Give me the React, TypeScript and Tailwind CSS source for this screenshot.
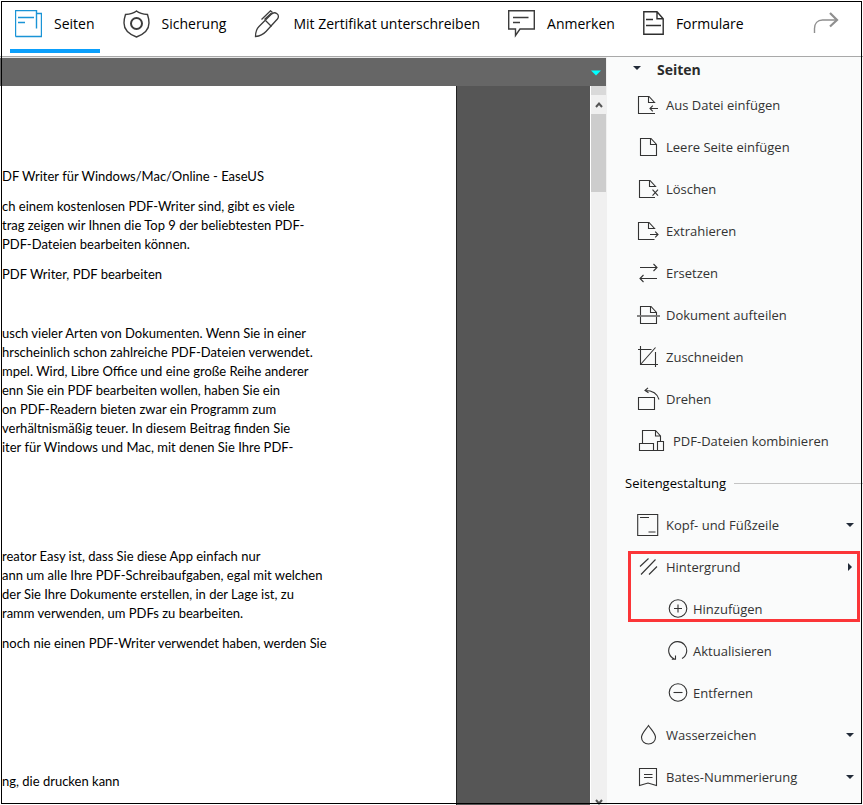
import type { ReactNode } from "react";
import clsx from "clsx";

type IconProps = { children: ReactNode; w?: number; h?: number; className?: string };

/* Line icons are drawn on a 1:1 pixel grid so the strokes stay crisp */
function Icon({ children, w = 24, h = 24, className }: IconProps) {
  return (
    <svg
      width={w}
      height={h}
      viewBox={`0 0 ${w} ${h}`}
      fill="none"
      stroke="currentColor"
      strokeWidth={1.1}
      className={clsx("shrink-0", className)}
      aria-hidden="true"
    >
      {children}
    </svg>
  );
}

const PagesIcon = () => (
  <Icon w={27} h={28} className="text-[#1a94d6]">
    <path d="M.5 26.5V.5h21v18M21.5 3.5h5v23H.5" strokeWidth={1.4} />
    <path d="M3 7.5h16M3 12.5h7" strokeWidth={1.6} />
  </Icon>
);

const ShieldIcon = () => (
  <Icon w={27} h={28} className="text-[#3c3c3c]">
    <path
      d="M13.5 1c2 1.6 6 3.2 11 3.5 1 3 1.5 5.5 1.5 8.5 0 6.5-4.5 11-12.5 14C5.500 24 1 19.5 1 13c0-3 .5-5.500 1.5-8.500 5-.3 9-1.900 11-3.500z"
      strokeWidth={1.4}
    />
    <circle cx="13.5" cy="13.5" r="5.5" strokeWidth={2} />
  </Icon>
);

const PenIcon = () => (
  <Icon w={27} h={28} className="text-[#3c3c3c]">
    <path
      d="M1.500 26.500c0-5 1-7.500 3.500-10L17 4.500c1.500-1.600 4-2.200 6-.8 1.800 1.300 1.800 3.500.4 5.300L12 21.500c-2.500 2.700-5.500 4.500-10.500 5z"
      strokeWidth={1.3}
    />
    <path d="M11.500 10.500l6 6M7.500 9.500l9-8.700 2 1.700" strokeWidth={1.3} />
    <path d="M10.500 9.500l7-6.500" strokeWidth={1.3} />
  </Icon>
);

const CommentIcon = () => (
  <Icon w={27} h={28} className="text-[#3c3c3c]">
    <path d="M.7 .7h25.600v18.300H12l-4.500 6.500v-6.500H.7z" strokeWidth={1.4} />
    <path d="M5 7.500h15.500M5 12.500h7" strokeWidth={1.6} />
  </Icon>
);

const FormIcon = () => (
  <Icon w={21} h={28} className="text-[#2e2e2e]">
    <path d="M.8 1.800h13.200l6.200 7v15.400H.8zM14 1.800v7h6.200" strokeWidth={1.4} />
    <path d="M3 9.500h7M3 15.500h15" strokeWidth={1.6} />
  </Icon>
);

const RedoIcon = () => (
  <Icon w={26} h={24} className="text-[#8f8f8f]">
    <path d="M1.500 22v-4.500c0-5 3-8.500 8-8.500h14" strokeWidth={1.4} />
    <path d="M17 2l7 7-7 6.500" strokeWidth={2.2} />
  </Icon>
);

const InsertIcon = () => (
  <Icon>
    <path d="M18 20.500H1.500v-17h10.500l5.500 6h-6v-6M13 15.500h8M15.800 12.700L13 15.500l2.800 2.800" />
  </Icon>
);

const BlankIcon = () => (
  <Icon>
    <path d="M3.500 3.500h10.500l5.500 6v11h-16zM13.500 3.500v6h6" />
  </Icon>
);

const DeleteIcon = () => (
  <Icon>
    <path d="M18 20.500H2.500v-17h10.500l5.500 6h-6v-6M15.500 12.700l5.500 6M21 12.700l-5.500 6" />
  </Icon>
);

const ExtractIcon = () => (
  <Icon>
    <path d="M17.500 20.500h-16v-17h10.500l5.500 6h-6v-6M13 15.500h8M18.200 12.700l2.800 2.800-2.800 2.800" />
  </Icon>
);

const ReplaceIcon = () => (
  <Icon>
    <path d="M3 6.500h17M16.500 3l3.500 3.500-3.500 3.500M20 17.500H3M6.500 14L3 17.500 6.500 21" />
  </Icon>
);

const SplitIcon = () => (
  <Icon>
    <path d="M3.500 3.500h10.500l5.500 6v11h-16zM13.500 3.500v6h6" />
    <path d="M0 13h23" stroke="#777" strokeWidth={1.8} />
  </Icon>
);

const CropIcon = () => (
  <Icon>
    <path d="M3.500 1v18.500H21M1 4.500h13.500M18.500 7v15M3.500 19.500l15-17" />
  </Icon>
);

const RotateIcon = () => (
  <Icon>
    <path d="M1.500 10.500h16v12h-16zM22 12.500C20.500 7 15.500 3.500 8 3.500M11 .8L8 3.500l3.500 2.300" />
  </Icon>
);

const CombineIcon = () => (
  <Icon w={31}>
    <path d="M5.500 14.500v-13h13l5 5.500v5M18.500 1.500v5.500h5M2.500 14.500h14v7h-14zM20.500 12.500h6v9h-6zM16.500 21.500h4" />
  </Icon>
);

const HeaderFooterIcon = () => (
  <Icon>
    <path d="M.7 1.500h20v21H.7z" />
    <path d="M3 4.500h9M11.500 19h7" />
  </Icon>
);

const BackgroundIcon = () => (
  <Icon>
    <path d="M3 11.500l8.500-8M4 19.500l14.500-15M12 19.500l8-8" />
  </Icon>
);

const AddIcon = () => (
  <Icon w={20} h={20}>
    <circle cx="10" cy="9.5" r="8.8" />
    <path d="M6 9.500h8M10 5.500v8" />
  </Icon>
);

const RefreshIcon = () => (
  <Icon w={20} h={20}>
    <path d="M6.500 18A9 9 0 1 1 14 17.500M3.800 18.300h3.700v-3.800" />
  </Icon>
);

const RemoveIcon = () => (
  <Icon w={20} h={20}>
    <circle cx="10" cy="9.5" r="8.8" />
    <path d="M5.500 9.500h9" />
  </Icon>
);

const DropIcon = () => (
  <Icon>
    <path d="M11.500 2.500c3 4.300 7 8 7 11.800 0 4-3 6.700-7 6.700s-7-2.700-7-6.700c0-3.800 4-7.500 7-11.800z" />
  </Icon>
);

const BatesIcon = () => (
  <Icon>
    <path d="M2.500 3.500h17v17l-8.500-2.500-8.500 2.500zM7 9.500h8.500M7 12.500h8.500" />
  </Icon>
);

function Caret({ dir = "down", className }: { dir?: "down" | "right"; className?: string }) {
  return (
    <svg width="8" height="8" viewBox="0 0 8 8" className={clsx("shrink-0 fill-current", className)} aria-hidden="true">
      <path d={dir === "down" ? "M0 2h8L4 6z" : "M2 0v8l4-4z"} />
    </svg>
  );
}

const tabs = [
  { label: "Seiten", icon: <PagesIcon />, active: true },
  { label: "Sicherung", icon: <ShieldIcon /> },
  { label: "Mit Zertifikat unterschreiben", icon: <PenIcon /> },
  { label: "Anmerken", icon: <CommentIcon /> },
  { label: "Formulare", icon: <FormIcon /> },
];

const pageTools = [
  { label: "Aus Datei einfügen", icon: <InsertIcon /> },
  { label: "Leere Seite einfügen", icon: <BlankIcon /> },
  { label: "Löschen", icon: <DeleteIcon /> },
  { label: "Extrahieren", icon: <ExtractIcon /> },
  { label: "Ersetzen", icon: <ReplaceIcon /> },
  { label: "Dokument aufteilen", icon: <SplitIcon /> },
  { label: "Zuschneiden", icon: <CropIcon /> },
  { label: "Drehen", icon: <RotateIcon /> },
  { label: "PDF-Dateien kombinieren", icon: <CombineIcon /> },
];

// The page is scrolled sideways, so every line starts mid-sentence
const paragraphs = [
  { space: "mt-0", lines: ["DF Writer für Windows/Mac/Online - EaseUS"] },
  {
    space: "mt-[11px]",
    lines: [
      "ch einem kostenlosen PDF-Writer sind, gibt es viele",
      "trag zeigen wir Ihnen die Top 9 der beliebtesten PDF-",
      "PDF-Dateien bearbeiten können.",
    ],
  },
  { space: "mt-[11px]", lines: ["PDF Writer, PDF bearbeiten"] },
  {
    space: "mt-10",
    lines: [
      "usch vieler Arten von Dokumenten. Wenn Sie in einer",
      "hrscheinlich schon zahlreiche PDF-Dateien verwendet.",
      "mpel. Wird, Libre Office und eine große Reihe anderer",
      "enn Sie ein PDF bearbeiten wollen, haben Sie ein",
      "on PDF-Readern bieten zwar ein Programm zum",
      "verhältnismäßig teuer. In diesem Beitrag finden Sie",
      "iter für Windows und Mac, mit denen Sie Ihre PDF-",
    ],
  },
  {
    space: "mt-[90px]",
    lines: [
      "reator Easy ist, dass Sie diese App einfach nur",
      "ann um alle Ihre PDF-Schreibaufgaben, egal mit welchen",
      "der Sie Ihre Dokumente erstellen, in der Lage ist, zu",
      "ramm verwenden, um PDFs zu bearbeiten.",
    ],
  },
  { space: "mt-[11px]", lines: ["noch nie einen PDF-Writer verwendet haben, werden Sie"] },
  { space: "mt-[119px]", lines: ["ng, die drucken kann"] },
];

type RowProps = { label: string; icon: ReactNode; caret?: "down" | "right"; sub?: boolean };

function ToolRow({ label, icon, caret, sub }: RowProps) {
  return (
    <button
      type="button"
      className={clsx("flex h-[42px] w-full items-center gap-[5px] pr-[9px] text-left", sub ? "pl-[61px]" : "pl-[30px]")}
    >
      {icon}
      <span className="whitespace-nowrap">{label}</span>
      {caret && <Caret dir={caret} className="ml-auto text-[#222b38]" />}
    </button>
  );
}

export default function App() {
  return (
    <div className="relative flex min-h-screen flex-col overflow-hidden bg-white font-['Open_Sans','Noto_Sans',sans-serif] text-sm text-black">
      {/* Toolbar */}
      <header className="flex h-[57px] shrink-0 items-start border-b border-[#a9a9a9] pr-6 pl-[10px]">
        <nav className="flex gap-[18px]">
          {tabs.map((tab) => (
            <button
              key={tab.label}
              type="button"
              className={clsx(
                "flex h-[53px] items-center gap-3 border-b-4 px-[5px] pb-0.5 whitespace-nowrap",
                tab.active ? "border-[#0a9ffb]" : "border-transparent",
              )}
            >
              {tab.icon}
              <span>{tab.label}</span>
            </button>
          ))}
        </nav>
        <button type="button" aria-label="Wiederholen" className="mt-[11px] ml-auto">
          <RedoIcon />
        </button>
      </header>

      <div className="flex grow">
        {/* Document */}
        <main className="flex min-w-0 grow flex-col border-r border-[#f0f0f0]">
          <div className="flex h-[29px] shrink-0 items-center justify-end border-t border-[#e6e6e6] bg-[#666] pt-0.5 pr-[5px]">
            <button type="button" aria-label="Optionen">
              <Caret className="size-[10px] text-[#0ff]" />
            </button>
          </div>
          <div className="flex grow bg-[#565656]">
            <article className="mr-[133px] min-w-0 grow overflow-hidden border-r border-[#222] bg-white pt-[81px] pl-0.5 font-[Lato,sans-serif] text-[13px] leading-[19px]">
              {paragraphs.map((p) => (
                <p key={p.lines[0]} className={p.space}>
                  {p.lines.map((line) => (
                    <span key={line} className="block whitespace-nowrap">
                      {line}
                    </span>
                  ))}
                </p>
              ))}
            </article>
            <div className="flex w-4 shrink-0 flex-col border-l border-white bg-[#f0f0f0] text-[#555]">
              <div className="h-[9px] bg-[#d9d9d9]" />
              <div className="flex h-[19px] items-center justify-center">
                <Icon w={8} h={8}>
                  <path d="M1 6l3-3.500L7 6" strokeWidth={2} />
                </Icon>
              </div>
              <div className="h-[78px] bg-[#cdcdcd]" />
              <div className="mt-auto flex h-[6px] items-end justify-center">
                <Icon w={8} h={6}>
                  <path d="M1 1l3 3.500L7 1" strokeWidth={2} />
                </Icon>
              </div>
            </div>
          </div>
        </main>

        {/* Page tools */}
        <aside className="w-64 shrink-0 bg-[#fafbfb] text-[13px] text-[#333]">
          <h2 className="flex h-[27px] items-center gap-4 pb-0.5 pl-[26px] text-sm font-bold text-[#2b2b2b]">
            <Caret className="mb-1 text-[#222b38]" />
            Seiten
          </h2>
          {pageTools.map((tool) => (
            <ToolRow key={tool.label} {...tool} />
          ))}

          <h3 className="flex h-[42px] items-center gap-2 pl-[18px] text-black">
            Seitengestaltung
            <span className="h-px grow bg-[#c4c4c4]" />
          </h3>
          <ToolRow label="Kopf- und Füßzeile" icon={<HeaderFooterIcon />} caret="down" />
          <div className="relative">
            <ToolRow label="Hintergrund" icon={<BackgroundIcon />} caret="right" />
            <ToolRow label="Hinzufügen" icon={<AddIcon />} sub />
            {/* Callout round the background group */}
            <div className="pointer-events-none absolute top-[5px] right-[3px] bottom-2 left-[21px] border-[3px] border-[#fb3538]" />
          </div>
          <ToolRow label="Aktualisieren" icon={<RefreshIcon />} sub />
          <ToolRow label="Entfernen" icon={<RemoveIcon />} sub />
          <ToolRow label="Wasserzeichen" icon={<DropIcon />} caret="down" />
          <ToolRow label="Bates-Nummerierung" icon={<BatesIcon />} caret="down" />
        </aside>
      </div>

      {/* Frame round the whole window */}
      <div className="pointer-events-none absolute inset-px border border-black" />
    </div>
  );
}
